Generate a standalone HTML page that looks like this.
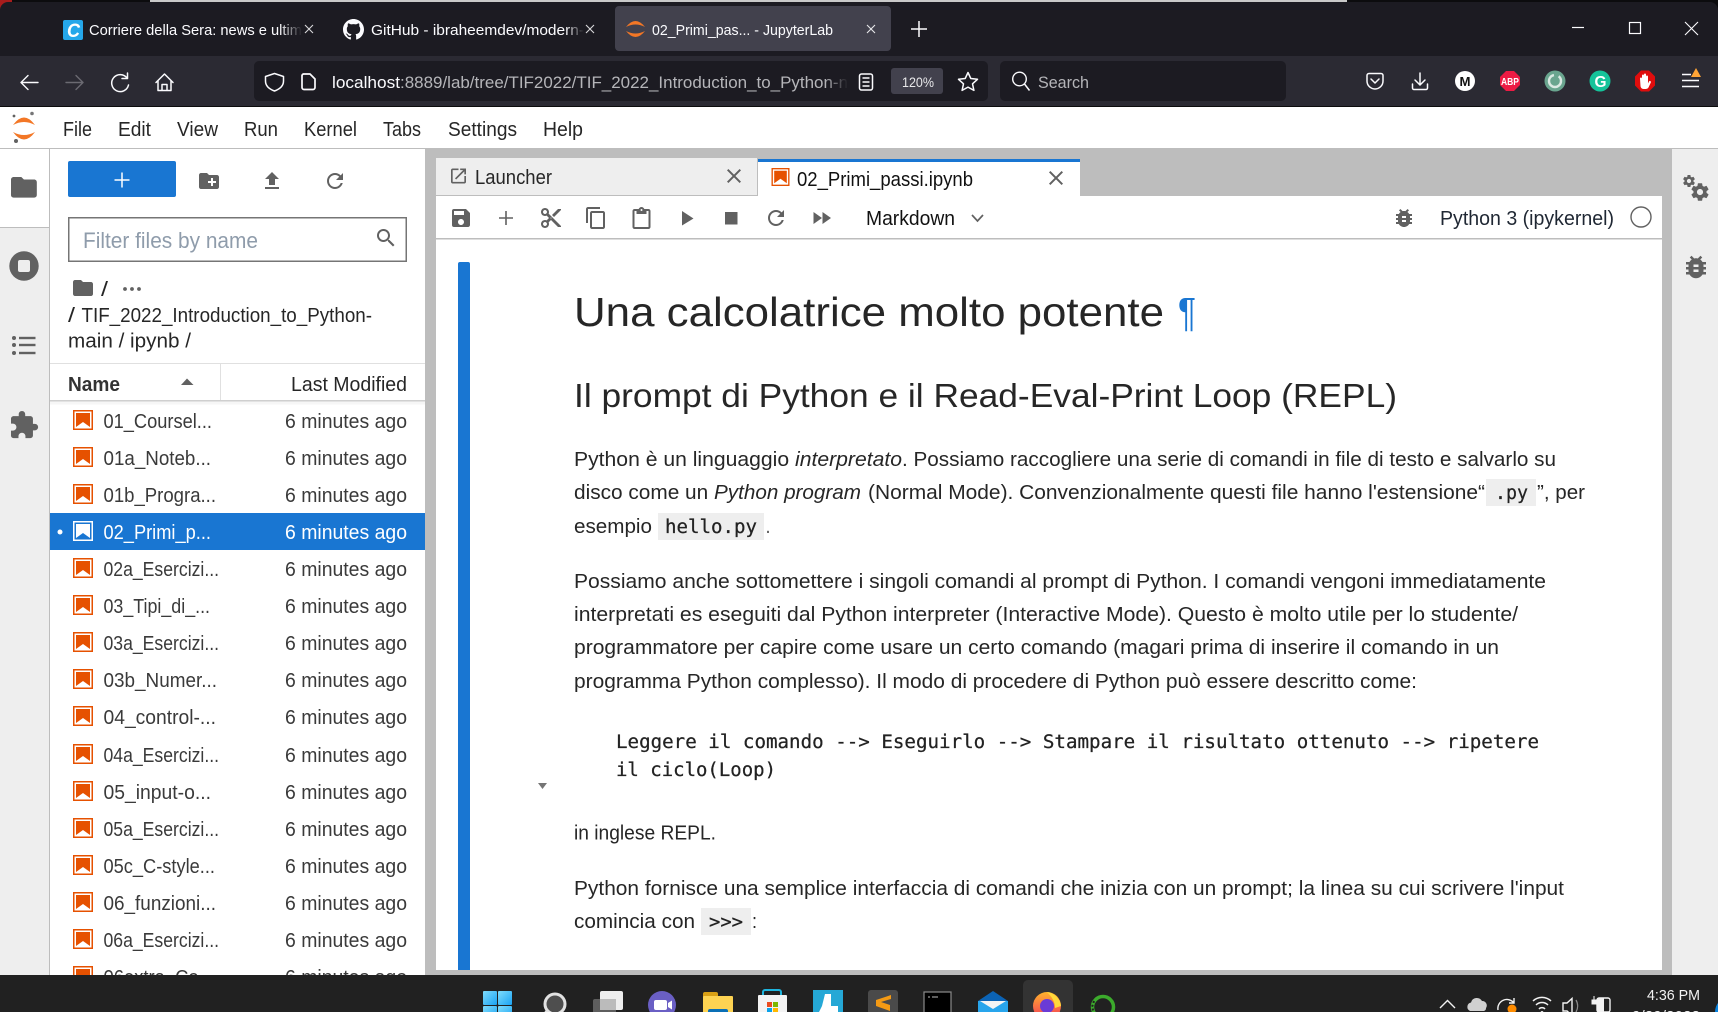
<!DOCTYPE html>
<html lang="en">
<head>
<meta charset="utf-8">
<title>02_Primi_passi - JupyterLab</title>
<style>
html,body{margin:0;padding:0;width:1718px;height:1012px;overflow:hidden;background:#fff}
svg{display:block}
text{font-family:"Liberation Sans",Arial,sans-serif;white-space:pre}
.m{font-family:"DejaVu Sans Mono","Liberation Mono",monospace;stroke:#222;stroke-width:.25px}
.i{font-style:italic}
.b{font-size:20px;fill:#262626}
.f{font-size:20px;fill:#3a3a3a}
.w{fill:#fff}
.ic{fill:#616161}
.st{fill:none;stroke:#fbfbfe;stroke-width:1.7;stroke-linecap:round;stroke-linejoin:round}
</style>
</head>
<body>
<svg xmlns="http://www.w3.org/2000/svg" width="1718" height="1012" viewBox="0 0 1718 1012">
<defs>
<linearGradient id="fa" gradientUnits="userSpaceOnUse" x1="280" x2="302" y1="0" y2="0"><stop offset="0" stop-color="#fbfbfe"/><stop offset="1" stop-color="#fbfbfe" stop-opacity="0"/></linearGradient>
<linearGradient id="fb" gradientUnits="userSpaceOnUse" x1="565" x2="584" y1="0" y2="0"><stop offset="0" stop-color="#fbfbfe"/><stop offset="1" stop-color="#fbfbfe" stop-opacity="0"/></linearGradient>
<linearGradient id="fc" gradientUnits="userSpaceOnUse" x1="825" x2="848" y1="0" y2="0"><stop offset="0" stop-color="#b5b5b9"/><stop offset="1" stop-color="#b5b5b9" stop-opacity="0"/></linearGradient>
<linearGradient id="win" x1="0" y1="0" x2="1" y2="1"><stop offset="0" stop-color="#7fdcfc"/><stop offset="1" stop-color="#1aa3f4"/></linearGradient>
<linearGradient id="fx" x1="0" y1="0" x2="0" y2="1"><stop offset="0" stop-color="#ffb32c"/><stop offset="1" stop-color="#f3365a"/></linearGradient>
<symbol id="nb" viewBox="0 0 20 20"><rect x=".75" y=".75" width="18.5" height="18.5" fill="none" stroke="#e65100" stroke-width="1.5"/><path d="M3 3H17V17L10 12 3 17Z" fill="#e65100"/></symbol>
<symbol id="nbw" viewBox="0 0 20 20"><rect x=".75" y=".75" width="18.5" height="18.5" fill="none" stroke="#fff" stroke-width="1.5"/><path d="M3 3H17V17L10 12 3 17Z" fill="#fff"/></symbol>
<symbol id="save" viewBox="0 0 24 24"><path d="M17 3H5a2 2 0 0 0-2 2v14a2 2 0 0 0 2 2h14c1.100 0 2-.9 2-2V7l-4-4zm-5 16c-1.660 0-3-1.340-3-3s1.340-3 3-3 3 1.340 3 3-1.340 3-3 3zm3-10H5V5h10v4z"/></symbol>
<symbol id="add" viewBox="0 0 24 24"><path d="M19 12.800h-6.200V19h-1.600v-6.200H5v-1.600h6.200V5h1.600v6.200H19z"/></symbol>
<symbol id="cut" viewBox="0 0 24 24"><path d="M9.640 7.640c.23-.5.36-1.050.36-1.640 0-2.210-1.790-4-4-4S2 3.790 2 6s1.790 4 4 4c.59 0 1.140-.13 1.640-.36L10 12l-2.360 2.360C7.140 14.130 6.590 14 6 14c-2.210 0-4 1.790-4 4s1.790 4 4 4 4-1.790 4-4c0-.59-.13-1.140-.36-1.640L12 14l7 7h3v-1L9.640 7.640zM6 8c-1.100 0-2-.89-2-2s.9-2 2-2 2 .89 2 2-.9 2-2 2zm0 12c-1.100 0-2-.89-2-2s.9-2 2-2 2 .89 2 2-.9 2-2 2zm6-7.500c-.28 0-.5-.22-.5-.5s.22-.5.5-.5.5.22.5.5-.22.5-.5.5zM19 3l-6 6 2 2 7-7V3z"/></symbol>
<symbol id="copy" viewBox="0 0 24 24"><path d="M16 1H4c-1.100 0-2 .9-2 2v14h2V3h12V1zm3 4H8c-1.100 0-2 .9-2 2v14c0 1.100.9 2 2 2h11c1.100 0 2-.9 2-2V7c0-1.100-.9-2-2-2zm0 16H8V7h11v14z"/></symbol>
<symbol id="paste" viewBox="0 0 24 24"><path d="M19 2h-4.180C14.400.84 13.300 0 12 0c-1.300 0-2.400.84-2.820 2H5c-1.100 0-2 .9-2 2v16c0 1.100.9 2 2 2h14c1.100 0 2-.9 2-2V4c0-1.100-.9-2-2-2zm-7 0c.55 0 1 .45 1 1s-.45 1-1 1-1-.45-1-1 .45-1 1-1zm7 18H5V4h2v3h10V4h2v16z"/></symbol>
<symbol id="refresh" viewBox="0 0 24 24"><path d="M17.650 6.350C16.200 4.900 14.210 4 12 4c-4.420 0-7.990 3.580-7.990 8s3.570 8 7.990 8c3.730 0 6.840-2.550 7.730-6h-2.080c-.82 2.330-3.040 4-5.650 4-3.310 0-6-2.690-6-6s2.690-6 6-6c1.660 0 3.140.69 4.220 1.780L13 11h7V4l-2.350 2.350z"/></symbol>
<symbol id="ffw" viewBox="0 0 24 24"><path d="M4 18l8.500-6L4 6v12zm9-12v12l8.500-6L13 6z"/></symbol>
<symbol id="bug" viewBox="0 0 24 24"><path d="M20 8h-2.810c-.45-.78-1.070-1.450-1.820-1.960L17 4.410 15.590 3l-2.170 2.170C12.960 5.060 12.490 5 12 5c-.49 0-.96.06-1.410.17L8.410 3 7 4.410l1.620 1.630C7.880 6.550 7.260 7.220 6.810 8H4v2h2.090c-.05.33-.09.66-.09 1v1H4v2h2v1c0 .34.04.67.09 1H4v2h2.810c1.040 1.790 2.970 3 5.190 3s4.150-1.210 5.190-3H20v-2h-2.090c.05-.33.09-.66.09-1v-1h2v-2h-2v-1c0-.34-.04-.67-.09-1H20V8zm-6 8h-4v-2h4v2zm0-4h-4v-2h4v2z"/></symbol>
<symbol id="folder" viewBox="0 0 24 24"><path d="M10 4H4c-1.100 0-1.990.9-1.990 2L2 18c0 1.100.9 2 2 2h16c1.100 0 2-.9 2-2V8c0-1.100-.9-2-2-2h-8l-2-2z"/></symbol>
<symbol id="nfolder" viewBox="0 0 24 24"><path d="M20 6h-8l-2-2H4c-1.110 0-1.990.89-1.990 2L2 18c0 1.110.89 2 2 2h16c1.110 0 2-.89 2-2V8c0-1.110-.89-2-2-2zm-1 8h-3v3h-2v-3h-3v-2h3V9h2v3h3v2z"/></symbol>
<symbol id="upload" viewBox="0 0 24 24"><path d="M9 16h6v-6h4l-7-7-7 7h4zm-4 2h14v2H5z"/></symbol>
<symbol id="search" viewBox="0 0 24 24"><path d="M15.500 14h-.79l-.28-.27C15.410 12.590 16 11.110 16 9.500 16 5.910 13.090 3 9.500 3S3 5.910 3 9.500 5.910 16 9.500 16c1.610 0 3.090-.59 4.230-1.570l.27.28v.79l5 4.990L20.490 19l-4.990-5zm-6 0C7.010 14 5 11.990 5 9.500S7.010 5 9.500 5 14 7.010 14 9.500 11.990 14 9.500 14z"/></symbol>
<symbol id="ext" viewBox="0 0 24 24"><path d="M20.500 11H19V7c0-1.100-.9-2-2-2h-4V3.500C13 2.120 11.880 1 10.500 1S8 2.120 8 3.500V5H4c-1.100 0-1.990.9-1.990 2v3.800H3.500c1.490 0 2.700 1.210 2.700 2.700s-1.210 2.700-2.700 2.700H2V20c0 1.100.9 2 2 2h3.800v-1.500c0-1.490 1.210-2.700 2.700-2.700 1.490 0 2.700 1.210 2.700 2.700V22H17c1.100 0 2-.9 2-2v-4h1.500c1.380 0 2.500-1.120 2.500-2.500S21.880 11 20.500 11z"/></symbol>
<symbol id="close" viewBox="0 0 24 24"><path d="M19 6.410L17.590 5 12 10.590 6.410 5 5 6.410 10.590 12 5 17.590 6.410 19 12 13.410 17.590 19 19 17.590 13.410 12z"/></symbol>
<symbol id="launch" viewBox="0 0 24 24"><path d="M19 19H5V5h7V3H5c-1.110 0-2 .9-2 2v14c0 1.100.89 2 2 2h14c1.100 0 2-.9 2-2v-7h-2v7zM14 3v2h3.590l-9.830 9.830 1.410 1.410L19 6.410V10h2V3h-7z"/></symbol>
<symbol id="gear" viewBox="0 0 24 24"><path d="M19.430 12.980c.04-.32.07-.64.07-.98s-.03-.66-.07-.98l2.110-1.650c.19-.15.24-.42.12-.64l-2-3.460c-.12-.22-.39-.3-.61-.22l-2.490 1c-.52-.4-1.080-.73-1.690-.98l-.38-2.650C14.460 2.180 14.250 2 14 2h-4c-.25 0-.46.18-.49.42l-.38 2.650c-.61.25-1.170.59-1.690.98l-2.490-1c-.23-.09-.49 0-.61.22l-2 3.460c-.13.22-.07.49.12.64l2.110 1.650c-.04.32-.07.65-.07.98s.03.66.07.98l-2.110 1.650c-.19.15-.24.42-.12.64l2 3.460c.12.22.39.3.61.22l2.490-1c.52.4 1.080.73 1.690.98l.38 2.650c.03.24.24.42.49.42h4c.25 0 .46-.18.49-.42l.38-2.650c.61-.25 1.170-.59 1.690-.98l2.490 1c.23.09.49 0 .61-.22l2-3.460c.12-.22.07-.49-.12-.64l-2.110-1.650zM12 15.500c-1.930 0-3.500-1.570-3.500-3.500s1.570-3.500 3.500-3.500 3.500 1.570 3.500 3.500-1.570 3.500-3.500 3.500z"/></symbol>
</defs>

<!-- window top -->
<rect width="1718" height="12" fill="#0c0c0e"/>
<rect x="0" y="0" width="12" height="10" fill="#a81c1c"/>
<rect x="150" y="0" width="1197" height="2" fill="#c9c9c9"/>
<rect x="0" y="2" width="1718" height="54" rx="8" fill="#1c1b22"/>
<rect x="0" y="12" width="1718" height="44" fill="#1c1b22"/>

<!-- tabs -->
<rect x="63" y="20" width="20" height="20" rx="2" fill="#25a7ea"/>
<text x="67" y="37" font-size="19" font-weight="bold" font-style="italic" fill="#fff" textLength="13" lengthAdjust="spacingAndGlyphs">C</text>
<text x="89" y="35" font-size="15" fill="url(#fa)" textLength="213" lengthAdjust="spacingAndGlyphs">Corriere della Sera: news e ultim</text>
<path d="M305 25l8 8M313 25l-8 8" stroke="#d8d8da" stroke-width="1.100" fill="none"/>
<svg x="343" y="19" width="21" height="21" viewBox="0 0 16 16"><path fill="#fbfbfe" d="M8 0C3.580 0 0 3.580 0 8c0 3.540 2.290 6.530 5.470 7.590.4.07.55-.17.55-.38 0-.19-.01-.82-.01-1.490-2.010.37-2.530-.49-2.690-.94-.09-.23-.48-.94-.82-1.130-.28-.15-.68-.52-.01-.53.63-.01 1.080.58 1.230.82.72 1.210 1.870.87 2.330.66.07-.52.28-.87.51-1.070-1.780-.2-3.640-.89-3.640-3.950 0-.87.31-1.590.82-2.150-.08-.2-.36-1.020.08-2.120 0 0 .67-.21 2.200.82.64-.18 1.320-.27 2-.27.68 0 1.360.09 2 .27 1.530-1.040 2.200-.82 2.200-.82.44 1.100.16 1.920.08 2.120.51.56.82 1.270.82 2.150 0 3.070-1.870 3.750-3.650 3.950.29.25.54.73.54 1.480 0 1.070-.01 1.930-.01 2.200 0 .21.15.46.55.38A8.013 8.013 0 0016 8c0-4.420-3.580-8-8-8z"/></svg>
<text x="371" y="35" font-size="15" fill="url(#fb)" textLength="213" lengthAdjust="spacingAndGlyphs">GitHub - ibraheemdev/modern-</text>
<path d="M586 25l8 8M594 25l-8 8" stroke="#d8d8da" stroke-width="1.100" fill="none"/>
<rect x="615" y="6" width="276" height="45" rx="4" fill="#42414d"/>
<path d="M626 27Q635.500 15 645 27Q635.500 22 626 27ZM626 31Q635.500 43 645 31Q635.500 36 626 31Z" fill="#f37726"/>
<text x="652" y="35" font-size="15" fill="#fbfbfe" textLength="181" lengthAdjust="spacingAndGlyphs">02_Primi_pas... - JupyterLab</text>
<path d="M867 25l8 8M875 25l-8 8" stroke="#e8e8ea" stroke-width="1.100" fill="none"/>
<path d="M919 21v16M911 29h16" stroke="#fbfbfe" stroke-width="1.500" fill="none"/>
<path d="M1572 27.500h12" stroke="#fbfbfe" stroke-width="1.200"/>
<rect x="1629.500" y="22.500" width="11" height="11" fill="none" stroke="#fbfbfe" stroke-width="1.200"/>
<path d="M1685 22l13 13M1698 22l-13 13" stroke="#fbfbfe" stroke-width="1.100"/>

<!-- nav toolbar -->
<rect x="0" y="56" width="1718" height="51" fill="#2b2a33"/>
<rect x="0" y="106" width="1718" height="1" fill="#0c0c0d"/>
<path class="st" style="stroke-width:1.400" d="M21 82.500H38M21 82.500l7-7M21 82.500l7 7"/>
<path class="st" style="stroke:#6b6a72;stroke-width:1.400" d="M83 82.500H66M83 82.500l-7-7M83 82.500l-7 7"/>
<path class="st" style="stroke-width:1.500" d="M127 78A8.500 8.500 0 1 0 128.500 85M127.500 73v5.500H122"/>
<path class="st" style="stroke-width:1.500" d="M156 82.500L164.500 74 173 82.500M158 81V90.500H171V81M162 90.500V84.500H167V90.500"/>
<rect x="254" y="61" width="734" height="40" rx="5" fill="#1c1b22"/>
<path class="st" style="stroke-width:1.500" d="M274.500 73.500L283.500 76.500V81C283.500 86 280 89 274.500 91C269 89 265.500 86 265.500 81V76.500Z"/>
<path class="st" d="M303.500 74H310L315 79V87.500a2 2 0 0 1-2 2H304a2 2 0 0 1-2-2V75.500a2 2 0 0 1 1.500-1.500Z"/>
<text x="332" y="88" font-size="17" fill="#fbfbfe" textLength="68" lengthAdjust="spacingAndGlyphs">localhost</text>
<text x="400" y="88" font-size="17" fill="url(#fc)" textLength="448" lengthAdjust="spacingAndGlyphs">:8889/lab/tree/TIF2022/TIF_2022_Introduction_to_Python-n</text>
<rect x="859.500" y="74" width="13" height="16" rx="2" fill="none" stroke="#fbfbfe" stroke-width="1.500"/>
<path d="M862.500 78h7M862.500 82h7M862.500 86h7" stroke="#fbfbfe" stroke-width="1.500"/>
<rect x="891" y="68" width="52" height="26" rx="3" fill="#42414d"/>
<text x="902" y="87" font-size="14" fill="#e8e8ea" textLength="32" lengthAdjust="spacingAndGlyphs">120%</text>
<path class="st" style="stroke-width:1.500" d="M968 72.500L970.800 78.500 977.500 79.300 972.500 83.800 973.900 90.400 968 87.100 962.100 90.400 963.500 83.800 958.500 79.300 965.200 78.500Z"/>
<rect x="1000" y="61" width="286" height="40" rx="5" fill="#1c1b22"/>
<circle cx="1019.500" cy="79" r="6.800" fill="none" stroke="#fbfbfe" stroke-width="1.400"/>
<path d="M1024.500 84l5 6.500" stroke="#fbfbfe" stroke-width="1.500"/>
<text x="1038" y="88" font-size="17" fill="#b5b5b9" textLength="51" lengthAdjust="spacingAndGlyphs">Search</text>
<path class="st" style="stroke-width:1.500" d="M1367 75.500a2 2 0 0 1 2-2H1381a2 2 0 0 1 2 2V81A8 8 0 0 1 1367 81ZM1371 79l4 4 4-4"/>
<path class="st" style="stroke-width:1.500" d="M1420 73v12M1415 80l5 5 5-5M1412.500 84v4a1.500 1.500 0 0 0 1.500 1.500H1426a1.500 1.500 0 0 0 1.500-1.500v-4"/>
<circle cx="1465" cy="81" r="10" fill="#fff"/>
<text x="1459.500" y="86" font-size="13" font-weight="bold" fill="#111" textLength="11" lengthAdjust="spacingAndGlyphs">M</text>
<path d="M1506 71h8l6 6v8l-6 6h-8l-6-6v-8Z" fill="#ed1b44"/>
<text x="1501" y="85" font-size="10" font-weight="bold" fill="#fff" textLength="18" lengthAdjust="spacingAndGlyphs">ABP</text>
<circle cx="1555" cy="81" r="10.500" fill="#6aa58f"/>
<circle cx="1555" cy="81" r="6" fill="none" stroke="#dbe9e3" stroke-width="2.400" stroke-dasharray="27 5"/>
<circle cx="1600" cy="81" r="10.500" fill="#15c39a"/>
<text x="1594.500" y="87" font-size="16" font-weight="bold" fill="#fff" textLength="12" lengthAdjust="spacingAndGlyphs">G</text>
<path d="M1641 70.500h8l6 6v9l-6 6h-8l-6-6v-9Z" fill="#e00d0d"/>
<path d="M1640 78.500a1 1 0 0 1 2 0v-3a1 1 0 0 1 2 0v-1a1 1 0 0 1 2 0v2a1 1 0 0 1 2 0v7l1-2a1 1 0 0 1 1.800 1l-2.300 5a3 3 0 0 1-2.500 1.500h-2.500a3 3 0 0 1-3-3Z" fill="#fff"/>
<path d="M1682 74.500h9M1682 80.500h17M1682 86.500h17" stroke="#fbfbfe" stroke-width="1.500"/>
<path d="M1696 68l5 9h-10Z" fill="#ffa436"/>

<!-- jupyter menu -->
<rect x="0" y="107" width="1718" height="41" fill="#fff"/>
<rect x="0" y="148" width="1718" height="1" fill="#bdbdbd"/>
<path d="M13 125Q24 110 35 125Q24 119 13 125ZM13 132Q24 147 35 132Q24 138 13 132Z" fill="#f37726"/>
<circle cx="14" cy="116" r="1.400" fill="#616161"/><circle cx="32" cy="113.500" r="1.800" fill="#767677"/><circle cx="16" cy="141" r="2" fill="#616161"/>
<text class="b" x="63" y="136" textLength="29" lengthAdjust="spacingAndGlyphs">File</text>
<text class="b" x="118" y="136" textLength="33" lengthAdjust="spacingAndGlyphs">Edit</text>
<text class="b" x="177" y="136" textLength="41" lengthAdjust="spacingAndGlyphs">View</text>
<text class="b" x="244" y="136" textLength="34" lengthAdjust="spacingAndGlyphs">Run</text>
<text class="b" x="304" y="136" textLength="53" lengthAdjust="spacingAndGlyphs">Kernel</text>
<text class="b" x="383" y="136" textLength="38" lengthAdjust="spacingAndGlyphs">Tabs</text>
<text class="b" x="448" y="136" textLength="69" lengthAdjust="spacingAndGlyphs">Settings</text>
<text class="b" x="543" y="136" textLength="40" lengthAdjust="spacingAndGlyphs">Help</text>

<!-- main background -->
<rect x="425" y="149" width="1247" height="826" fill="#bdbdbd"/>

<!-- left sidebar -->
<rect x="0" y="149" width="49" height="826" fill="#eeeeee"/>
<rect x="0" y="149" width="49" height="78" fill="#fff"/>
<rect x="0" y="227" width="49" height="1" fill="#bdbdbd"/>
<rect x="49" y="149" width="1" height="826" fill="#bdbdbd"/>
<use href="#folder" class="ic" x="8.400" y="171.800" width="31" height="31"/>
<circle cx="24" cy="266" r="14.700" fill="#616161"/>
<rect x="18" y="260" width="12" height="12" rx="2" fill="#eee"/>
<g fill="#616161"><circle cx="14" cy="338" r="2"/><circle cx="14" cy="345" r="2"/><circle cx="14" cy="353" r="2"/><rect x="19" y="336.800" width="16.500" height="2.400"/><rect x="19" y="343.800" width="16.500" height="2.400"/><rect x="19" y="351.800" width="16.500" height="2.400"/></g>
<use href="#ext" class="ic" x="8.400" y="409.700" width="31" height="31"/>

<!-- file browser -->
<rect x="50" y="149" width="375" height="826" fill="#fff"/>
<rect x="68" y="161" width="108" height="36" rx="2" fill="#1976d2"/>
<path d="M122 172.500v15M114.500 180h15" stroke="#fff" stroke-width="1.500"/>
<use href="#nfolder" class="ic" x="197" y="169" width="24" height="24"/>
<use href="#upload" class="ic" x="260" y="169" width="24" height="24"/>
<use href="#refresh" class="ic" x="323" y="169" width="24" height="24"/>
<rect x="68.750" y="217.750" width="337.500" height="43.500" fill="#fff" stroke="#757575" stroke-width="1.500"/>
<text x="83" y="248" font-size="22" fill="#8f9cab" textLength="175" lengthAdjust="spacingAndGlyphs">Filter files by name</text>
<use href="#search" class="ic" x="374" y="226" width="24" height="24"/>
<use href="#folder" class="ic" x="71" y="276" width="24" height="24"/>
<text class="b" x="101" y="296" textLength="7" lengthAdjust="spacingAndGlyphs">/</text>
<g fill="#616161"><circle cx="125" cy="289" r="1.900"/><circle cx="132" cy="289" r="1.900"/><circle cx="139" cy="289" r="1.900"/></g>
<text class="b" x="68" y="322" textLength="7" lengthAdjust="spacingAndGlyphs">/</text>
<text class="b" x="81.500" y="322" textLength="290.500" lengthAdjust="spacingAndGlyphs">TIF_2022_Introduction_to_Python-</text>
<text class="b" x="68" y="347.500" textLength="123" lengthAdjust="spacingAndGlyphs">main / ipynb /</text>
<rect x="50" y="363" width="375" height="1" fill="#e0e0e0"/>
<rect x="220" y="364" width="1" height="36" fill="#e0e0e0"/>
<rect x="50" y="400" width="375" height="1.500" fill="#cfcfcf"/>
<rect x="50" y="401.500" width="375" height="3" fill="#f6f6f6"/>
<text x="68" y="391" font-size="20" font-weight="bold" fill="#333" textLength="52" lengthAdjust="spacingAndGlyphs">Name</text>
<path d="M181 385l6-6.500 6.500 6.500Z" fill="#616161"/>
<text class="b" x="291" y="391" textLength="116" lengthAdjust="spacingAndGlyphs">Last Modified</text>

<rect x="50" y="513" width="375" height="37" fill="#1976d2"/>
<circle cx="60" cy="532" r="2.500" fill="#fff"/>

<use href="#nb" x="73" y="410" width="20" height="20"/><text class="f" x="103.500" y="428" textLength="108.500" lengthAdjust="spacingAndGlyphs">01_Coursel...</text><text class="f" x="285" y="428" textLength="122" lengthAdjust="spacingAndGlyphs">6 minutes ago</text>
<use href="#nb" x="73" y="447" width="20" height="20"/><text class="f" x="103.500" y="465" textLength="107.500" lengthAdjust="spacingAndGlyphs">01a_Noteb...</text><text class="f" x="285" y="465" textLength="122" lengthAdjust="spacingAndGlyphs">6 minutes ago</text>
<use href="#nb" x="73" y="484" width="20" height="20"/><text class="f" x="103.500" y="502" textLength="112.500" lengthAdjust="spacingAndGlyphs">01b_Progra...</text><text class="f" x="285" y="502" textLength="122" lengthAdjust="spacingAndGlyphs">6 minutes ago</text>
<use href="#nbw" x="73" y="521" width="20" height="20"/><text class="f w" x="103.500" y="539" textLength="107.500" lengthAdjust="spacingAndGlyphs">02_Primi_p...</text><text class="f w" x="285" y="539" textLength="122" lengthAdjust="spacingAndGlyphs">6 minutes ago</text>
<use href="#nb" x="73" y="558" width="20" height="20"/><text class="f" x="103.500" y="576" textLength="115.500" lengthAdjust="spacingAndGlyphs">02a_Esercizi...</text><text class="f" x="285" y="576" textLength="122" lengthAdjust="spacingAndGlyphs">6 minutes ago</text>
<use href="#nb" x="73" y="595" width="20" height="20"/><text class="f" x="103.500" y="613" textLength="106.500" lengthAdjust="spacingAndGlyphs">03_Tipi_di_...</text><text class="f" x="285" y="613" textLength="122" lengthAdjust="spacingAndGlyphs">6 minutes ago</text>
<use href="#nb" x="73" y="632" width="20" height="20"/><text class="f" x="103.500" y="650" textLength="115.500" lengthAdjust="spacingAndGlyphs">03a_Esercizi...</text><text class="f" x="285" y="650" textLength="122" lengthAdjust="spacingAndGlyphs">6 minutes ago</text>
<use href="#nb" x="73" y="669" width="20" height="20"/><text class="f" x="103.500" y="687" textLength="113.500" lengthAdjust="spacingAndGlyphs">03b_Numer...</text><text class="f" x="285" y="687" textLength="122" lengthAdjust="spacingAndGlyphs">6 minutes ago</text>
<use href="#nb" x="73" y="706" width="20" height="20"/><text class="f" x="103.500" y="724" textLength="112.500" lengthAdjust="spacingAndGlyphs">04_control-...</text><text class="f" x="285" y="724" textLength="122" lengthAdjust="spacingAndGlyphs">6 minutes ago</text>
<use href="#nb" x="73" y="744" width="20" height="20"/><text class="f" x="103.500" y="762" textLength="115.500" lengthAdjust="spacingAndGlyphs">04a_Esercizi...</text><text class="f" x="285" y="762" textLength="122" lengthAdjust="spacingAndGlyphs">6 minutes ago</text>
<use href="#nb" x="73" y="781" width="20" height="20"/><text class="f" x="103.500" y="799" textLength="107.500" lengthAdjust="spacingAndGlyphs">05_input-o...</text><text class="f" x="285" y="799" textLength="122" lengthAdjust="spacingAndGlyphs">6 minutes ago</text>
<use href="#nb" x="73" y="818" width="20" height="20"/><text class="f" x="103.500" y="836" textLength="115.500" lengthAdjust="spacingAndGlyphs">05a_Esercizi...</text><text class="f" x="285" y="836" textLength="122" lengthAdjust="spacingAndGlyphs">6 minutes ago</text>
<use href="#nb" x="73" y="855" width="20" height="20"/><text class="f" x="103.500" y="873" textLength="111.500" lengthAdjust="spacingAndGlyphs">05c_C-style...</text><text class="f" x="285" y="873" textLength="122" lengthAdjust="spacingAndGlyphs">6 minutes ago</text>
<use href="#nb" x="73" y="892" width="20" height="20"/><text class="f" x="103.500" y="910" textLength="112.500" lengthAdjust="spacingAndGlyphs">06_funzioni...</text><text class="f" x="285" y="910" textLength="122" lengthAdjust="spacingAndGlyphs">6 minutes ago</text>
<use href="#nb" x="73" y="929" width="20" height="20"/><text class="f" x="103.500" y="947" textLength="115.500" lengthAdjust="spacingAndGlyphs">06a_Esercizi...</text><text class="f" x="285" y="947" textLength="122" lengthAdjust="spacingAndGlyphs">6 minutes ago</text>
<use href="#nb" x="73" y="966" width="20" height="20"/><text class="f" x="103.500" y="984" textLength="110.500" lengthAdjust="spacingAndGlyphs">06extra_Co...</text><text class="f" x="285" y="984" textLength="122" lengthAdjust="spacingAndGlyphs">6 minutes ago</text>

<!-- dock tabs -->
<rect x="436" y="158" width="321" height="38" fill="#eeeeee"/>
<rect x="436" y="195" width="321" height="1" fill="#bdbdbd"/>
<use href="#launch" class="ic" x="448.500" y="166" width="20" height="20"/>
<text class="b" x="475" y="184" textLength="77" lengthAdjust="spacingAndGlyphs">Launcher</text>
<use href="#close" class="ic" x="722" y="164" width="24" height="24"/>
<rect x="758" y="159" width="322" height="38" fill="#fff"/>
<rect x="758" y="159" width="322" height="3" fill="#1976d2"/>
<use href="#nb" x="771.500" y="168" width="18" height="18"/>
<text x="797" y="186" font-size="20" fill="#111" textLength="176" lengthAdjust="spacingAndGlyphs">02_Primi_passi.ipynb</text>
<use href="#close" class="ic" x="1044" y="166" width="24" height="24"/>

<!-- notebook panel -->
<rect x="436" y="196" width="1226" height="774" fill="#fff"/>
<rect x="758" y="195" width="322" height="2" fill="#fff"/>
<rect x="436" y="238" width="1226" height="1.500" fill="#bdbdbd"/>
<use href="#save" class="ic" x="449" y="206" width="24" height="24"/>
<use href="#add" class="ic" x="494" y="206" width="24" height="24"/>
<use href="#cut" class="ic" x="539" y="206" width="24" height="24"/>
<use href="#copy" class="ic" x="584" y="206" width="24" height="24"/>
<use href="#paste" class="ic" x="629.500" y="207" width="24" height="24"/>
<path d="M682 211L693.500 218.500 682 225.500Z" fill="#616161"/>
<rect x="725" y="212" width="12.500" height="12.500" fill="#616161"/>
<use href="#refresh" class="ic" x="764" y="206" width="24" height="24"/>
<use href="#ffw" class="ic" x="809.500" y="206" width="24" height="24"/>
<text x="866" y="225" font-size="20" fill="#111" textLength="89" lengthAdjust="spacingAndGlyphs">Markdown</text>
<path d="M972 215l5.500 6 5.500-6" fill="none" stroke="#616161" stroke-width="1.700"/>
<use href="#bug" class="ic" x="1392" y="206" width="24" height="24"/>
<text x="1440" y="225" font-size="20" fill="#1f2733" textLength="174" lengthAdjust="spacingAndGlyphs">Python 3 (ipykernel)</text>
<circle cx="1641" cy="217" r="10" fill="none" stroke="#616161" stroke-width="1.400"/>

<!-- collapser -->
<path d="M458 970V264a2 2 0 0 1 2-2h8a2 2 0 0 1 2 2V970Z" fill="#1976d2"/>
<path d="M538 783h9l-4.500 6Z" fill="#757575"/>

<!-- notebook text -->
<text x="574" y="326" font-size="41" fill="#262626" textLength="590" lengthAdjust="spacingAndGlyphs">Una calcolatrice molto potente</text>
<text x="1178" y="326" font-size="41" fill="#1976d2" textLength="18" lengthAdjust="spacingAndGlyphs">¶</text>
<text x="574" y="407" font-size="33" fill="#262626" textLength="823" lengthAdjust="spacingAndGlyphs">Il prompt di Python e il Read-Eval-Print Loop (REPL)</text>

<text class="b" x="574" y="466" textLength="221" lengthAdjust="spacingAndGlyphs">Python è un linguaggio </text>
<text class="b i" x="795" y="466" textLength="107" lengthAdjust="spacingAndGlyphs">interpretato</text>
<text class="b" x="902" y="466" textLength="654" lengthAdjust="spacingAndGlyphs">. Possiamo raccogliere una serie di comandi in file di testo e salvarlo su</text>

<text class="b" x="574" y="499" textLength="140" lengthAdjust="spacingAndGlyphs">disco come un </text>
<text class="b i" x="714" y="499" textLength="147" lengthAdjust="spacingAndGlyphs">Python program</text>
<text class="b" x="868" y="499" textLength="617" lengthAdjust="spacingAndGlyphs">(Normal Mode). Convenzionalmente questi file hanno l'estensione“</text>
<rect x="1486" y="479" width="50" height="27" fill="#eeeeee"/>
<text class="m" x="1495" y="499" font-size="18.500" fill="#222" textLength="33" lengthAdjust="spacingAndGlyphs">.py</text>
<text class="b" x="1537" y="499" textLength="48" lengthAdjust="spacingAndGlyphs">”, per</text>

<text class="b" x="574" y="533" textLength="78" lengthAdjust="spacingAndGlyphs">esempio</text>
<rect x="658" y="513" width="106" height="27" fill="#eeeeee"/>
<text class="m" x="665" y="533" font-size="18.500" fill="#222" textLength="92" lengthAdjust="spacingAndGlyphs">hello.py</text>
<text class="b" x="766" y="533" textLength="4" lengthAdjust="spacingAndGlyphs">.</text>

<text class="b" x="574" y="588" textLength="972" lengthAdjust="spacingAndGlyphs">Possiamo anche sottomettere i singoli comandi al prompt di Python. I comandi vengoni immediatamente</text>
<text class="b" x="574" y="621" textLength="944" lengthAdjust="spacingAndGlyphs">interpretati es eseguiti dal Python interpreter (Interactive Mode). Questo è molto utile per lo studente/</text>
<text class="b" x="574" y="654" textLength="925" lengthAdjust="spacingAndGlyphs">programmatore per capire come usare un certo comando (magari prima di inserire il comando in un</text>
<text class="b" x="574" y="688" textLength="843" lengthAdjust="spacingAndGlyphs">programma Python complesso). Il modo di procedere di Python può essere descritto come:</text>

<text class="m" x="616" y="748" font-size="18.500" fill="#222" textLength="923" lengthAdjust="spacingAndGlyphs">Leggere il comando --&gt; Eseguirlo --&gt; Stampare il risultato ottenuto --&gt; ripetere</text>
<text class="m" x="616" y="776" font-size="18.500" fill="#222" textLength="160" lengthAdjust="spacingAndGlyphs">il ciclo(Loop)</text>

<text class="b" x="574" y="839.500" textLength="142" lengthAdjust="spacingAndGlyphs">in inglese REPL.</text>

<text class="b" x="574" y="895" textLength="990" lengthAdjust="spacingAndGlyphs">Python fornisce una semplice interfaccia di comandi che inizia con un prompt; la linea su cui scrivere l'input</text>
<text class="b" x="574" y="928" textLength="121" lengthAdjust="spacingAndGlyphs">comincia con</text>
<rect x="701" y="908" width="50" height="27" fill="#eeeeee"/>
<text class="m" x="709" y="928" font-size="18.500" fill="#222" textLength="34" lengthAdjust="spacingAndGlyphs">&gt;&gt;&gt;</text>
<text class="b" x="752" y="928" textLength="5" lengthAdjust="spacingAndGlyphs">:</text>

<!-- right sidebar -->
<rect x="1672" y="149" width="46" height="826" fill="#eeeeee"/>
<use href="#gear" class="ic" x="1681.800" y="173.800" width="14.400" height="14.400"/>
<use href="#gear" class="ic" x="1689.500" y="181.500" width="21" height="21"/>
<use href="#bug" class="ic" x="1681" y="252" width="30" height="30"/>

<!-- taskbar -->
<rect x="0" y="975" width="1718" height="37" fill="#212121"/>
<g fill="url(#win)"><rect x="483" y="991" width="14" height="14" rx="1"/><rect x="498" y="991" width="14" height="14" rx="1"/><rect x="483" y="1006" width="14" height="14" rx="1"/><rect x="498" y="1006" width="14" height="14" rx="1"/></g>
<circle cx="555" cy="1004" r="10" fill="#4e4e4e" stroke="#e2e2e2" stroke-width="3"/>
<path d="M547 1011l-3 4" stroke="#e2e2e2" stroke-width="3"/>
<rect x="593" y="999" width="23" height="20" rx="2" fill="#5e5e5e"/>
<rect x="600" y="991" width="23" height="19" rx="2" fill="#eeeeee"/>
<rect x="600" y="999" width="16" height="11" fill="#bbbbbb"/>
<circle cx="662" cy="1005" r="14" fill="#6a5fc4"/>
<rect x="654" y="1000" width="13" height="10" rx="2" fill="#fff"/>
<path d="M668 1003l4-2.500v9l-4-2.500Z" fill="#fff"/>
<rect x="703" y="992" width="15" height="8" rx="2" fill="#d9a015"/>
<rect x="703" y="996" width="30" height="18" rx="1" fill="#fdd352"/>
<rect x="708" y="1009" width="20" height="8" rx="2" fill="#0a6fb5"/>
<path d="M763 996V992a2 2 0 0 1 2-2H779a2 2 0 0 1 2 2V996" fill="none" stroke="#1eb5de" stroke-width="2"/>
<rect x="758" y="995" width="29" height="20" rx="1" fill="#f3f3f3"/>
<rect x="767" y="1002" width="5" height="5" fill="#ea4b1f"/><rect x="773" y="1002" width="5" height="5" fill="#7db800"/><rect x="767" y="1008" width="5" height="5" fill="#0aa2ea"/><rect x="773" y="1008" width="5" height="5" fill="#ffb900"/>
<rect x="813" y="990" width="30" height="24" fill="#25a8d6"/>
<path d="M825 994h6v12h7v6h-19l3-6Z" fill="#fff"/>
<rect x="868" y="990" width="30" height="24" rx="3" fill="#4a4a4a"/>
<path d="M891 995l-15 5v6l14 5v-6l-9-3 10-3Z" fill="#f49a14"/>
<rect x="924" y="992" width="27" height="22" fill="#000" stroke="#8b8b8b" stroke-width="1.200"/>
<path d="M928 997h2M932 997h6" stroke="#bbb" stroke-width="1"/>
<rect x="978" y="1001" width="30" height="14" fill="#28a5ec"/>
<path d="M978 1001L993 991 1008 1001Z" fill="#0b63b5"/>
<path d="M980 1001H1006L993 1009Z" fill="#f4f4f4"/>
<rect x="1023" y="980" width="50" height="36" rx="5" fill="#333333"/>
<circle cx="1047" cy="1006" r="14" fill="url(#fx)"/>
<path d="M1047 992c8 1 14 8 14 14l-6 2c0-6-3-11-8-16Z" fill="#ffd93a"/>
<circle cx="1047" cy="1006" r="7" fill="#6a3bd6"/>
<circle cx="1103" cy="1007" r="10.500" fill="none" stroke="#3cab2c" stroke-width="3.500"/>
<path d="M1094 1001l-2 6 2 6" fill="none" stroke="#212121" stroke-width="2" stroke-dasharray="2 2"/>

<path d="M1440 1008l7.500-7.500 7.500 7.500" fill="none" stroke="#f2f2f2" stroke-width="1.400"/>
<path d="M1470 1011a4.500 4.500 0 0 1 1-8.500 6 6 0 0 1 11-1.500 4.500 4.500 0 0 1 4 7 3 3 0 0 1-2 3Z" fill="#d0d0d0"/>
<path d="M1498 1010a9 9 0 0 1 16-7M1514 998v5h-5" fill="none" stroke="#f2f2f2" stroke-width="1.400"/>
<circle cx="1512" cy="1009" r="4.500" fill="#ff8c00"/>
<path d="M1533 1001a13 13 0 0 1 18 0M1536 1005a8.500 8.500 0 0 1 12 0M1539 1009a4 4 0 0 1 6 0" fill="none" stroke="#f2f2f2" stroke-width="1.500"/>
<circle cx="1542" cy="1012.500" r="1.500" fill="#f2f2f2"/>
<path d="M1563 1003h4l5-4.500v17l-5-4.500h-4Z" fill="none" stroke="#f2f2f2" stroke-width="1.400"/>
<path d="M1576 1000a12 12 0 0 1 0 12" fill="none" stroke="#8a8a8a" stroke-width="1.300"/>
<rect x="1597" y="998" width="13" height="14" rx="2" fill="none" stroke="#f2f2f2" stroke-width="1.400"/>
<rect x="1597" y="998" width="7" height="14" fill="#f2f2f2"/>
<path d="M1592 1000h4v4h-4ZM1594 996v4" fill="#f2f2f2" stroke="#f2f2f2"/>
<text x="1647" y="1000" font-size="15" fill="#f2f2f2" textLength="53" lengthAdjust="spacingAndGlyphs">4:36 PM</text>
<text x="1632" y="1021" font-size="15" fill="#f2f2f2" textLength="68" lengthAdjust="spacingAndGlyphs">9/29/2022</text>
<circle cx="1730" cy="1012" r="15" fill="#0a84e0"/>
</svg>
</body>
</html>
